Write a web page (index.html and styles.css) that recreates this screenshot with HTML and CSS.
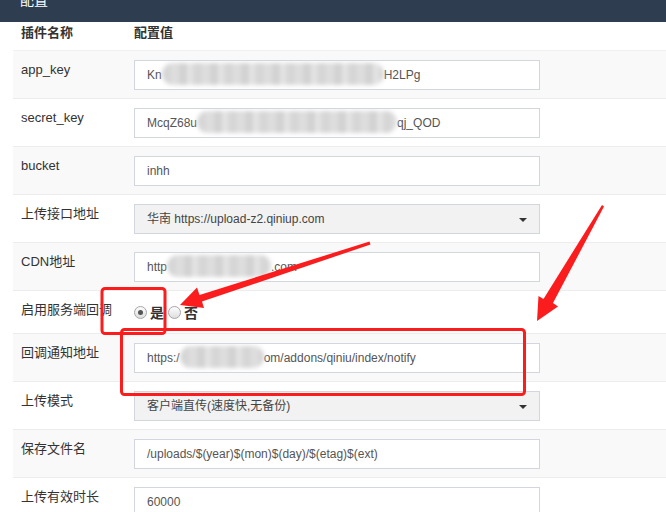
FILE: index.html
```html
<!DOCTYPE html>
<html lang="zh">
<head>
<meta charset="utf-8">
<title>配置</title>
<link rel="stylesheet" href="styles.css">
</head>
<body>
<div class="page">
  <div class="panel-heading"><span class="panel-title">配置</span></div>
  <table class="cfg">
    <thead>
      <tr><th class="c-name">插件名称</th><th>配置值</th></tr>
    </thead>
    <tbody>
      <tr>
        <td>app_key</td>
        <td><div class="field">Kn<span class="mask m-appkey"></span>H2LPg</div></td>
      </tr>
      <tr>
        <td>secret_key</td>
        <td><div class="field">McqZ68u<span class="mask m-secret"></span>qj_QOD</div></td>
      </tr>
      <tr>
        <td>bucket</td>
        <td><div class="field">inhh</div></td>
      </tr>
      <tr>
        <td>上传接口地址</td>
        <td><div class="field select">华南 https://upload-z2.qiniup.com<span class="caret"></span></div></td>
      </tr>
      <tr>
        <td>CDN地址</td>
        <td><div class="field">http<span class="mask m-cdn"></span>.com</div></td>
      </tr>
      <tr class="radio-row">
        <td>启用服务端回调</td>
        <td>
          <div class="radios">
            <label class="radio"><span class="dot checked"></span>是</label>
            <label class="radio"><span class="dot"></span>否</label>
          </div>
        </td>
      </tr>
      <tr>
        <td>回调通知地址</td>
        <td><div class="field">https:/<span class="mask m-cb"></span>om/addons/qiniu/index/notify</div></td>
      </tr>
      <tr>
        <td>上传模式</td>
        <td><div class="field select">客户端直传(速度快,无备份)<span class="caret"></span></div></td>
      </tr>
      <tr>
        <td>保存文件名</td>
        <td><div class="field">/uploads/$(year)$(mon)$(day)/$(etag)$(ext)</div></td>
      </tr>
      <tr>
        <td>上传有效时长</td>
        <td><div class="field">60000</div></td>
      </tr>
    </tbody>
  </table>

  <svg class="annot" width="666" height="512" viewBox="0 0 666 512" xmlns="http://www.w3.org/2000/svg">
    <rect x="102" y="288.5" width="63" height="45" rx="3" fill="none" stroke="#fb1d1d" stroke-width="3"/>
    <rect x="121.5" y="329.5" width="403" height="65" rx="3" fill="none" stroke="#fb1d1d" stroke-width="3"/>
    <polygon fill="#fb1d1d" points="369.5,241.5 370.5,244.5 202,301.5 204,308 180,305 197,287.5 199.5,295"/>
    <polygon fill="#fb1d1d" points="602,205 604,206.5 553,303 558,306.5 537,321 538.5,296 543.5,299"/>
  </svg>
</div>
</body>
</html>
```
FILE: styles.css
```css
* { box-sizing: border-box; }
html, body { margin: 0; padding: 0; background: #fff; }
body {
  font-family: "Liberation Sans", Arial, "Noto Sans CJK SC", sans-serif;
  font-size: 13px;
  color: #333;
  width: 666px;
  height: 512px;
  overflow: hidden;
}
.page { position: relative; width: 666px; height: 512px; overflow: hidden; }

.panel-heading {
  height: 22px;
  background: #2e3e50;
  overflow: hidden;
  padding-left: 20px;
}
.panel-title {
  display: block;
  color: #fff;
  font-size: 14px;
  line-height: 14px;
  margin-top: -7px;
}

.cfg {
  margin-left: 13px;
  width: 653px;
  border-collapse: collapse;
  border-spacing: 0;
}
.cfg th {
  text-align: left;
  font-weight: bold;
  line-height: 20px;
  padding: 1px 8px 6px;
  border-bottom: 1px solid #f0f0f0;
  color: #333;
  height: 28px;
}
.cfg th.c-name { width: 113px; }
.cfg td {
  vertical-align: top;
  padding: 9px 8px 8px;
  line-height: 20px;
  border-top: 1px solid #ededed;
}
.cfg td:first-child { width: 113px; }
.cfg tbody tr:nth-child(odd) { background: #f9f9f9; }

.field {
  position: relative;
  width: 406px;
  height: 30px;
  border: 1px solid #d2d6de;
  background: #fff;
  padding: 0 12px;
  font-size: 12px;
  line-height: 29px;
  color: #555;
  white-space: nowrap;
  overflow: hidden;
}
.field.select { background: #f2f2f2; color: #444; }
.caret {
  position: absolute;
  right: 12px;
  top: 13px;
  width: 0;
  height: 0;
  border-left: 4px solid transparent;
  border-right: 4px solid transparent;
  border-top: 4px solid #333;
}

.mask {
  display: inline-block;
  vertical-align: middle;
  height: 22px;
  margin-top: -2px;
  border-radius: 11px;
  background: repeating-linear-gradient(90deg, #d6d6d6 0 9px, #dedede 9px 17px, #d2d2d2 17px 25px, #e4e4e4 25px 31px);
  filter: blur(2px);
}
.m-appkey { width: 222px; }
.m-secret { width: 200px; }
.m-cdn { width: 104px; }
.m-cb { width: 84px; }

.radio-row td { padding-bottom: 7px; }
.radios {
  display: flex;
  align-items: center;
  height: 26px;
}
.radio {
  display: inline-flex;
  align-items: center;
  font-weight: bold;
  font-size: 14px;
  color: #333;
  margin-right: 4px;
}
.dot {
  display: inline-block;
  width: 13px;
  height: 13px;
  border-radius: 50%;
  border: 1px solid #a6a6a6;
  background: linear-gradient(#fdfdfd, #dedede);
  margin-right: 3px;
  position: relative;
}
.dot.checked::after {
  content: "";
  position: absolute;
  left: 3px;
  top: 3px;
  width: 5px;
  height: 5px;
  border-radius: 50%;
  background: #555;
}

.annot {
  position: absolute;
  left: 0;
  top: 0;
  pointer-events: none;
}
```
